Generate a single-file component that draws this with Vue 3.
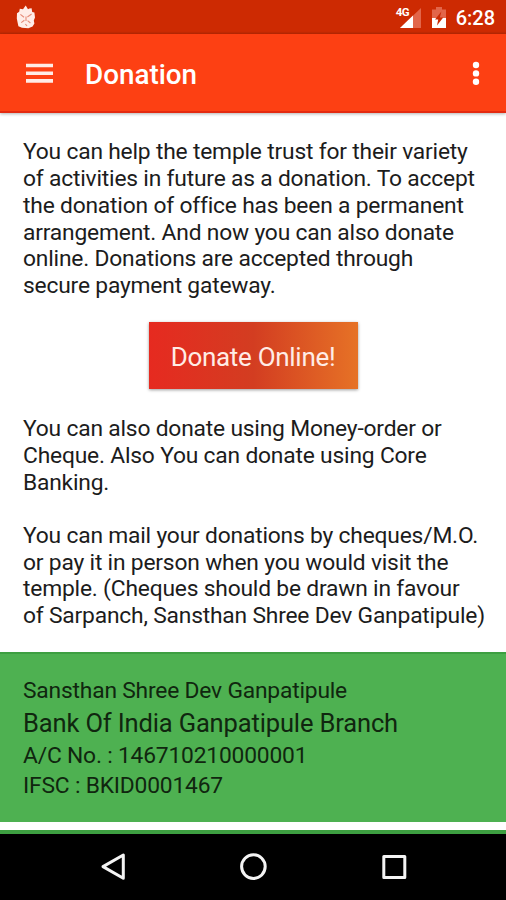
<template>
  <div class="screen">
    <header class="status-bar">
      <svg class="ganesh" width="20" height="24" viewBox="0 0 20 24">
        <path
          d="M9.7 0.6 L12 4.2 L13.4 3.6 L15.6 3.2 L16.2 7 L18.4 7.6 L19 12.6 L17.8 15.4 L18.4 18.4 L16.6 21.6 L12.4 23.2 L6 22.8 L2.4 21.2 L1.6 17.4 L0.8 13.4 L1 8.2 L3.2 6.8 L3.8 3.8 L7 4.2 Z"
          fill="#ffede8"
        />
        <path
          d="M4.4 9.4 L8 12.2 M15.6 9 L11.4 12 M10 11.4 V16 M5.2 17.6 L8.4 15.2 M11.6 15.6 L14.4 18 M9.4 19 L11 21"
          stroke="#e58b78"
          stroke-width="1.1"
          fill="none"
        />
      </svg>
      <div class="status-icons">
        <div class="signal">
          <span class="network">4G</span>
          <svg width="21" height="20" viewBox="0 0 21 20">
            <path d="M0 20 L21 0 V20 Z" fill="#e2664a" />
            <path d="M0 20 L13 7.6 V20 Z" fill="#fff" />
          </svg>
        </div>
        <svg class="battery" width="14" height="21" viewBox="0 0 14 21">
          <path d="M4 0 H10 V2.6 H14 V11 H0 V2.6 H4 Z" fill="#e2664a" />
          <path d="M0 11 H14 V21 H0 Z" fill="#fff" />
          <path d="M9.4 4.6 L3 12.6 H6.2 L5 18.4 L11.2 10.4 H7.8 Z" fill="#cb2a03" />
        </svg>
        <span class="clock">6:28</span>
      </div>
    </header>

    <nav class="app-bar">
      <svg class="menu" width="27" height="20" viewBox="0 0 27 20">
        <path d="M0 2.5 H27 M0 10.2 H27 M0 17.9 H27" stroke="#ffece6" stroke-width="3.6" />
      </svg>
      <h1>Donation</h1>
      <svg class="more" width="8" height="24" viewBox="0 0 8 24">
        <circle v-for="cy in [4, 12.4, 20.8]" :key="cy" cx="4" :cy="cy" r="3.2" fill="#fff" />
      </svg>
    </nav>

    <main>
      <p class="copy">
        <span v-for="line in intro" :key="line">{{ line }}</span>
      </p>
      <button class="donate" type="button">Donate Online!</button>
      <p class="copy">
        <span v-for="line in offline" :key="line">{{ line }}</span>
      </p>
      <p class="copy mail">
        <span v-for="line in mail" :key="line">{{ line }}</span>
      </p>
      <section class="bank">
        <p class="holder">Sansthan Shree Dev Ganpatipule</p>
        <p class="branch">Bank Of India Ganpatipule Branch</p>
        <p class="account">A/C No. : 146710210000001</p>
        <p class="ifsc">IFSC : BKID0001467</p>
      </section>
      <section class="bank next"></section>
    </main>

    <footer class="nav-bar">
      <svg width="506" height="66" viewBox="0 0 506 66" fill="none" stroke="#f4f4f4" stroke-width="3">
        <path d="M123.3 21 V44.2 L103 32.6 Z" stroke-linejoin="round" />
        <circle cx="253.4" cy="32.6" r="11.8" />
        <rect x="383.8" y="22.5" width="21" height="21" stroke-linejoin="round" />
      </svg>
    </footer>
  </div>
</template>

<script setup>
const intro = [
  'You can help the temple trust for their variety',
  'of activities in future as a donation. To accept',
  'the donation of office has been a permanent',
  'arrangement. And now you can also donate',
  'online. Donations are accepted through',
  'secure payment gateway.'
]

const offline = [
  'You can also donate using Money-order or',
  'Cheque. Also You can donate using Core',
  'Banking.'
]

const mail = [
  'You can mail your donations by cheques/M.O.',
  'or pay it in person when you would visit the',
  'temple. (Cheques should be drawn in favour',
  'of Sarpanch, Sansthan Shree Dev Ganpatipule)'
]
</script>

<style>
body {
  margin: 0;
}
</style>

<style scoped>
.screen {
  display: flex;
  flex-direction: column;
  width: 506px;
  height: 900px;
  overflow: hidden;
  background: #fff;
  color: #1c1c1c;
  font-family: Roboto, "Liberation Sans", sans-serif;
}

p,
h1 {
  margin: 0;
  font-weight: 400;
}

.status-bar {
  display: flex;
  flex: none;
  justify-content: space-between;
  box-sizing: border-box;
  height: 34px;
  padding: 5px 11px 0 16px;
  background: linear-gradient(#cd2a02 31px, #b92804 34px);
}

.status-icons {
  display: flex;
}

.signal {
  position: relative;
  height: 20px;
  margin: 3px 11px 0 0;
}

.signal svg {
  display: block;
}

.network {
  position: absolute;
  top: -2px;
  left: -4px;
  font-size: 11.5px;
  font-weight: 700;
  letter-spacing: -0.5px;
  line-height: 13px;
  color: #fff;
}

.battery {
  margin: 2px 10px 0 0;
}

.clock {
  font-size: 20px;
  font-weight: 500;
  line-height: 26px;
  color: #fff;
}

.app-bar {
  display: flex;
  flex: none;
  align-items: center;
  box-sizing: border-box;
  height: 79px;
  padding: 0 26px 0 26px;
  border-bottom: 2px solid #e42a10;
  background: #fd4013;
  box-shadow: 0 1px 3px rgba(0, 0, 0, 0.3);
}

.app-bar h1 {
  flex: 1;
  margin-left: 32px;
  padding-top: 5px;
  font-size: 27.8px;
  font-weight: 500;
  line-height: 32px;
  color: #fff;
}

main {
  display: flex;
  flex: 1;
  flex-direction: column;
  min-height: 0;
  padding-top: 26.4px;
}

.copy {
  flex: none;
  padding: 0 0 0 23px;
  font-size: 22.8px;
  letter-spacing: -0.19px;
  line-height: 26.7px;
}

.copy span {
  display: block;
  white-space: nowrap;
}

.mail {
  margin-top: 26.7px;
}

.donate {
  flex: none;
  align-self: center;
  width: 209px;
  height: 67px;
  margin: 22.4px 0 27.2px;
  padding: 3px 0 0;
  border: 0;
  background: linear-gradient(90deg, #e62a20, #d33d21 50%, #e67226);
  box-shadow: 0 1px 3px rgba(0, 0, 0, 0.4);
  font-family: inherit;
  font-size: 26px;
  letter-spacing: -0.3px;
  color: #ffece6;
}

.bank {
  box-sizing: border-box;
  flex: none;
  height: 170px;
  margin-top: 21.9px;
  padding: 23.5px 0 0 23px;
  border-top: 2px solid #3d9f41;
  background: #4eb151;
  color: #10260f;
  letter-spacing: -0.19px;
  white-space: nowrap;
}

.bank.next {
  height: 20px;
  margin-top: 8px;
  background: #3d9f41;
}

.holder {
  font-size: 22.8px;
  line-height: 27px;
}

.branch {
  font-size: 25.5px;
  letter-spacing: -0.14px;
  line-height: 38px;
}

.account {
  margin-top: 1px;
  font-size: 22.8px;
  line-height: 26px;
}

.ifsc {
  margin-top: 4px;
  font-size: 22.8px;
  line-height: 26px;
}

.nav-bar {
  position: relative;
  flex: none;
  height: 66px;
  background: #000;
}

.nav-bar svg {
  display: block;
}
</style>
